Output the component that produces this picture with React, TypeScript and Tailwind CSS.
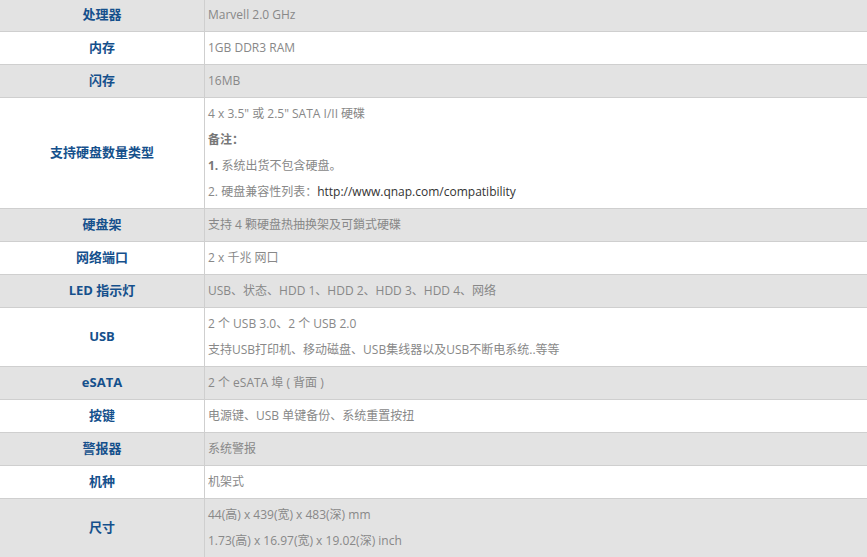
import React from "react";

type Row = { label: string; lines: React.ReactNode[]; gray: boolean };

const rows: Row[] = [
  { label: "处理器", lines: ["Marvell 2.0 GHz"], gray: true },
  { label: "内存", lines: ["1GB DDR3 RAM"], gray: false },
  { label: "闪存", lines: ["16MB"], gray: true },
  {
    label: "支持硬盘数量类型",
    lines: [
      '4 x 3.5" 或 2.5" SATA I/II 硬碟',
      <span className="font-bold text-[#777]">备注：</span>,
      <span>
        <b className="text-[#777]">1.</b> 系统出货不包含硬盘。
      </span>,
      <span>
        2. 硬盘兼容性列表：<span className="text-[#333]">http://www.qnap.com/compatibility</span>
      </span>,
    ],
    gray: false,
  },
  { label: "硬盘架", lines: ["支持 4 颗硬盘热抽换架及可鎖式硬碟"], gray: true },
  { label: "网络端口", lines: ["2 x 千兆 网口"], gray: false },
  { label: "LED 指示灯", lines: ["USB、状态、HDD 1、HDD 2、HDD 3、HDD 4、网络"], gray: true },
  {
    label: "USB",
    lines: ["2 个 USB 3.0、2 个 USB 2.0", "支持USB打印机、移动磁盘、USB集线器以及USB不断电系统..等等"],
    gray: false,
  },
  { label: "eSATA", lines: ["2 个 eSATA 埠 ( 背面 )"], gray: true },
  { label: "按键", lines: ["电源键、USB 单键备份、系统重置按扭"], gray: false },
  { label: "警报器", lines: ["系统警报"], gray: true },
  { label: "机种", lines: ["机架式"], gray: false },
  {
    label: "尺寸",
    lines: ["44(高) x 439(宽) x 483(深) mm", "1.73(高) x 16.97(宽) x 19.02(深) inch"],
    gray: true,
  },
];

export default function App() {
  return (
    <div className="w-[867px] h-[557px] overflow-hidden bg-white">
      <div
        className="-mt-[1px] flex flex-col"
        style={{ fontFamily: '"Open Sans", "Noto Sans CJK SC", sans-serif' }}
      >
        {rows.map((r, i) => (
          <div
            key={i}
            className={`flex border-b border-[#cfcfcf] ${r.gray ? "bg-[#e3e3e3]" : "bg-white"}`}
          >
            <div className="w-[205px] shrink-0 flex items-center justify-center border-r border-[#cfcfcf] text-[13px] font-bold text-[#15508c]">
              {r.label}
            </div>
            <div className="flex-1 py-[3px] pl-[3px] text-[12px] leading-[26px] text-[#888]">
              {r.lines.map((l, j) => (
                <div key={j}>{l}</div>
              ))}
            </div>
          </div>
        ))}
      </div>
    </div>
  );
}
